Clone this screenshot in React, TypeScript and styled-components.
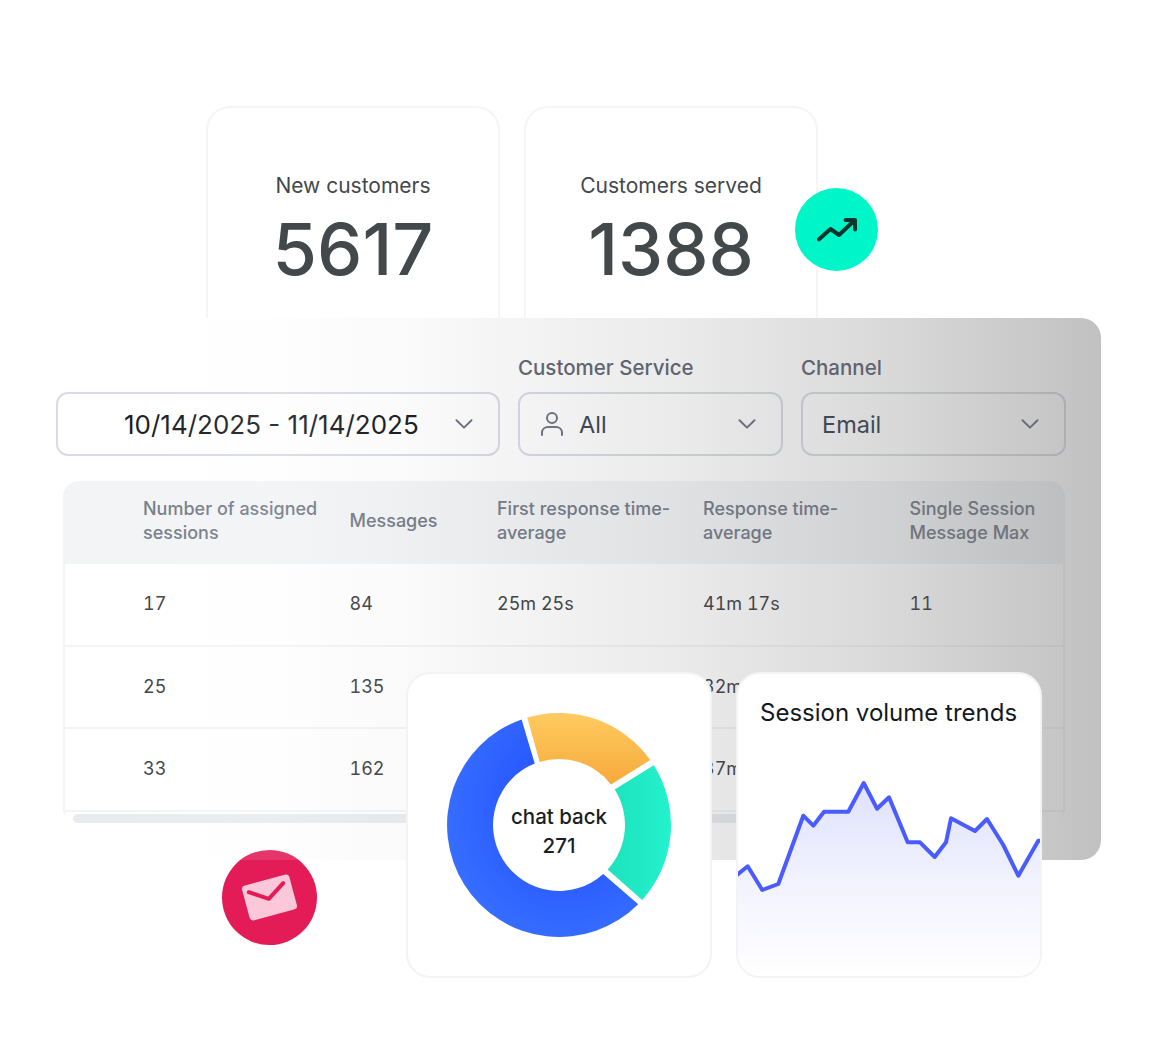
import styled, { createGlobalStyle } from 'styled-components';

const GlobalStyle = createGlobalStyle`
  html, body {
    margin: 0;
    background: #ffffff;
  }
  body {
    font-family: 'Inter', 'Liberation Sans', sans-serif;
  }
`;

const linePoints =
  '-1,106.7 10.7,97.3 25.3,121 41.3,115 66.3,46.7 76.3,56.7 87,42.7 111.3,42.7 126.7,14 140,39.7 152,28.3 170.7,73.3 183,73.3 197.7,88 209,73.3 214,49.3 238,62 250,50 266.3,76 281.3,106.7 301.3,71.7 306,72';

const columns = [
  'Number of assigned sessions',
  'Messages',
  'First response time-average',
  'Response time-average',
  'Single Session Message Max',
];

const rows = [
  ['17', '84', '25m 25s', '41m 17s', '11'],
  ['25', '135', '', '32m', ''],
  ['33', '162', '', '37m', ''],
];

function Chevron() {
  return (
    <ChevronIcon viewBox="0 0 18 10" fill="none">
      <path d="M1.5 1.2 9 8.6l7.5-7.4" stroke="#6b7280" strokeWidth="2" strokeLinecap="round" strokeLinejoin="round" />
    </ChevronIcon>
  );
}

export default function App() {
  return (
    <>
      <GlobalStyle />
      <Page>
        <StatRow>
          <StatCard>
            <StatLabel>New customers</StatLabel>
            <StatValue>5617</StatValue>
          </StatCard>
          <StatCard>
            <StatLabel>Customers served</StatLabel>
            <StatValue>1388</StatValue>
          </StatCard>
        </StatRow>

        <Panel>
          <Filters>
            <Field $width={444}>
              <Select $center>
                <DateText>10/14/2025 - 11/14/2025</DateText>
                <Chevron />
              </Select>
            </Field>
            <Field $width={265}>
              <FieldLabel>Customer Service</FieldLabel>
              <Select>
                <svg width="26" height="28" viewBox="0 0 26 28" fill="none">
                  <circle cx="13" cy="8" r="5" stroke="#6b7280" strokeWidth="2" />
                  <path d="M3 25v-2.5C3 19 6 17 9 17h8c3 0 6 2 6 5.500V25" stroke="#6b7280" strokeWidth="2" strokeLinecap="round" />
                </svg>
                <SelectText>All</SelectText>
                <Chevron />
              </Select>
            </Field>
            <Field $width={265}>
              <FieldLabel>Channel</FieldLabel>
              <Select>
                <SelectText>Email</SelectText>
                <Chevron />
              </Select>
            </Field>
          </Filters>

          <Table>
            <HeadRow>
              {columns.map((column) => (
                <HeadCell key={column}>{column}</HeadCell>
              ))}
            </HeadRow>
            {rows.map((row) => (
              <BodyRow key={row[0]}>
                {row.map((cell, index) => (
                  <BodyCell key={index}>{cell}</BodyCell>
                ))}
              </BodyRow>
            ))}
            <ScrollTrack>
              <ScrollThumb />
            </ScrollTrack>
          </Table>
        </Panel>

        <TrendBadge>
          <svg width="44" height="30" viewBox="0 0 44 30" fill="none">
            <path
              d="M4 24.300 15.500 14l8.500 6 15-14.300M30.500 5H40v9.500"
              stroke="#06352e"
              strokeWidth="4"
              strokeLinecap="round"
              strokeLinejoin="round"
            />
          </svg>
        </TrendBadge>

        <MailBadge>
          <svg width="95" height="95" viewBox="0 0 95 95" fill="none">
            <rect x="23" y="29.500" width="49" height="36" rx="4" fill="#fac8d8" transform="rotate(-15 47.500 47.500)" />
            <path d="M26.800 42.200 46.800 48.800 61.200 33.200" stroke="#e31c58" strokeWidth="4" strokeLinecap="round" strokeLinejoin="round" />
          </svg>
        </MailBadge>

        <Charts>
          <ChartCard>
            <DonutBox>
              <svg width="224" height="224" viewBox="-112 -112 224 224">
                <defs>
                  <linearGradient id="orange" x1="0" y1="0" x2="0" y2="1">
                    <stop offset="0" stopColor="#ffcb60" />
                    <stop offset="1" stopColor="#f6a93b" />
                  </linearGradient>
                  <linearGradient id="teal" x1="0" y1="0" x2="1" y2="0">
                    <stop offset="0" stopColor="#1de2bd" />
                    <stop offset="1" stopColor="#23f2cd" />
                  </linearGradient>
                  <radialGradient id="blue" cx="0.62" cy="0.4" r="0.75">
                    <stop offset="0.4" stopColor="#2a5bff" />
                    <stop offset="1" stopColor="#3a74ff" />
                  </radialGradient>
                </defs>
                <path d="M-31.800-107.400A112 112 0 0 1 91.200-65L52-40.600A66 66 0 0 0-19.300-63.100Z" fill="url(#orange)" />
                <path d="M94.800-59.700A112 112 0 0 1 83.200 74.900L48.700 44.500A66 66 0 0 0 55.700-35.400Z" fill="url(#teal)" />
                <path d="M79.200 79.200A112 112 0 1 1-37.400-105.600L-24.300-61.400A66 66 0 1 0 44.200 49Z" fill="url(#blue)" />
              </svg>
              <DonutLabel>
                chat back
                <br />
                271
              </DonutLabel>
            </DonutBox>
          </ChartCard>
          <ChartCard>
            <TrendTitle>Session volume trends</TrendTitle>
            <TrendChart viewBox="0 0 306 207" fill="none">
              <defs>
                <linearGradient id="area" x1="0" y1="14" x2="0" y2="207" gradientUnits="userSpaceOnUse">
                  <stop offset="0" stopColor="#dfe1fb" />
                  <stop offset="0.5" stopColor="#f1f2fe" />
                  <stop offset="1" stopColor="#ffffff" />
                </linearGradient>
              </defs>
              <polygon points={`${linePoints} 306,207 -1,207`} fill="url(#area)" />
              <polyline points={linePoints} stroke="#4a5cff" strokeWidth="4" strokeLinejoin="round" strokeLinecap="round" />
            </TrendChart>
          </ChartCard>
        </Charts>
      </Page>
    </>
  );
}

const Page = styled.div`
  position: relative;
  width: 1172px;
  height: 1060px;
  padding-top: 106px;
  box-sizing: border-box;
  overflow: hidden;
  background: #ffffff;
`;

const StatRow = styled.div`
  display: flex;
  gap: 24px;
  height: 212px;
  padding-left: 206px;
`;

const StatCard = styled.div`
  box-sizing: border-box;
  width: 294px;
  padding-top: 66px;
  border: 2px solid #f5f5f6;
  border-bottom: none;
  border-radius: 24px 24px 0 0;
  text-align: center;
  color: #43484b;
`;

const StatLabel = styled.div`
  font-size: 21px;
  line-height: 24px;
`;

const StatValue = styled.div`
  margin-top: 9px;
  font-size: 72px;
  line-height: 84px;
  font-weight: 500;
`;

const Panel = styled.div`
  position: relative;
  box-sizing: border-box;
  width: 1101px;
  height: 542px;
  padding: 37px 35px 0 56px;
  border-radius: 0 20px 20px 0;

  &::after {
    content: '';
    position: absolute;
    inset: 0;
    z-index: 2;
    border-radius: inherit;
    pointer-events: none;
    background: linear-gradient(
      90deg,
      rgba(255, 255, 255, 0) 9%,
      rgba(248, 248, 248, 0.12) 24.5%,
      rgba(170, 170, 170, 0.05) 36%,
      rgba(100, 100, 100, 0.13) 61%,
      rgba(100, 100, 100, 0.24) 80%,
      rgba(100, 100, 100, 0.4) 100%
    );
  }
`;

const Filters = styled.div`
  display: flex;
  align-items: flex-end;
  gap: 18px;
`;

const Field = styled.div<{ $width: number }>`
  width: ${(p) => p.$width}px;
`;

const FieldLabel = styled.div`
  margin-bottom: 11px;
  font-size: 20.500px;
  line-height: 26px;
  font-weight: 500;
  color: #5d6472;
`;

const Select = styled.div<{ $center?: boolean }>`
  display: flex;
  align-items: center;
  gap: 14px;
  box-sizing: border-box;
  height: 64px;
  padding: 0 25px 0 ${(p) => (p.$center ? '66px' : '19px')};
  border: 2px solid #d8dbe4;
  border-radius: 12px;
  background: #ffffff;
`;

const DateText = styled.span`
  flex: 1;
  font-size: 26px;
  color: #15181c;
`;

const SelectText = styled.span`
  flex: 1;
  font-size: 23.500px;
  color: #374151;
`;

const ChevronIcon = styled.svg`
  width: 18px;
  height: 10px;
  flex: none;
`;

const Table = styled.div`
  width: 1002px;
  height: 343px;
  margin: 25px 0 0 7px;
  border-radius: 16px;
  overflow: hidden;
`;

const HeadRow = styled.div`
  display: grid;
  grid-template-columns: 206.500px 147.500px 206px 206.500px 1fr;
  align-items: center;
  box-sizing: border-box;
  height: 83px;
  padding: 0 0 3px 80px;
  background: #f2f4f6;
`;

const HeadCell = styled.div`
  max-width: 180px;
  font-size: 18px;
  line-height: 24px;
  font-weight: 500;
  color: #737a86;
`;

const BodyRow = styled(HeadRow)`
  height: 82.500px;
  padding: 0 0 1px 78px;
  border: solid #f3f4f5;
  border-width: 0 2px 2px;
  background: #ffffff;
`;

const BodyCell = styled.div`
  font-size: 18px;
  font-variant-numeric: tabular-nums;
  color: #3c4043;
`;

const ScrollTrack = styled.div`
  box-sizing: border-box;
  height: 14.500px;
  padding: 2px 8px;
  border: solid #f3f4f5;
  border-width: 0 2px 2px;
  border-radius: 0 0 16px 16px;
`;

const ScrollThumb = styled.div`
  width: 860px;
  height: 9px;
  border-radius: 5px;
  background: #eaebee;
`;

const TrendBadge = styled.div`
  position: absolute;
  left: 795px;
  top: 188px;
  display: flex;
  align-items: center;
  justify-content: center;
  width: 83px;
  height: 83px;
  border-radius: 50%;
  background: #00f5c8;
`;

const MailBadge = styled.div`
  position: absolute;
  z-index: 1;
  left: 222px;
  top: 850px;
  width: 95px;
  height: 95px;
  border-radius: 50%;
  background: #e31c58;
`;

const Charts = styled.div`
  position: absolute;
  z-index: 3;
  left: 406px;
  top: 672px;
  display: flex;
  gap: 24px;
`;

const ChartCard = styled.div`
  position: relative;
  display: flex;
  flex-direction: column;
  box-sizing: border-box;
  width: 306px;
  height: 306px;
  border: 2px solid #f3f3f5;
  border-radius: 24px;
  background: #ffffff;
  overflow: hidden;
`;

const DonutBox = styled.div`
  position: relative;
  width: 224px;
  height: 224px;
  margin: 39px 0 0 39px;
`;

const DonutLabel = styled.div`
  position: absolute;
  inset: 12px 0 0;
  display: flex;
  align-items: center;
  justify-content: center;
  text-align: center;
  font-size: 20.500px;
  line-height: 29px;
  font-weight: 500;
  color: #1a1f24;
`;

const TrendTitle = styled.div`
  height: 96px;
  padding: 24px 0 0 22px;
  box-sizing: border-box;
  font-size: 24px;
  line-height: 30px;
  font-weight: 400;
  color: #14191e;
`;

const TrendChart = styled.svg`
  display: block;
  width: 306px;
  height: 207px;
  margin-left: -1px;
  flex: none;
`;
